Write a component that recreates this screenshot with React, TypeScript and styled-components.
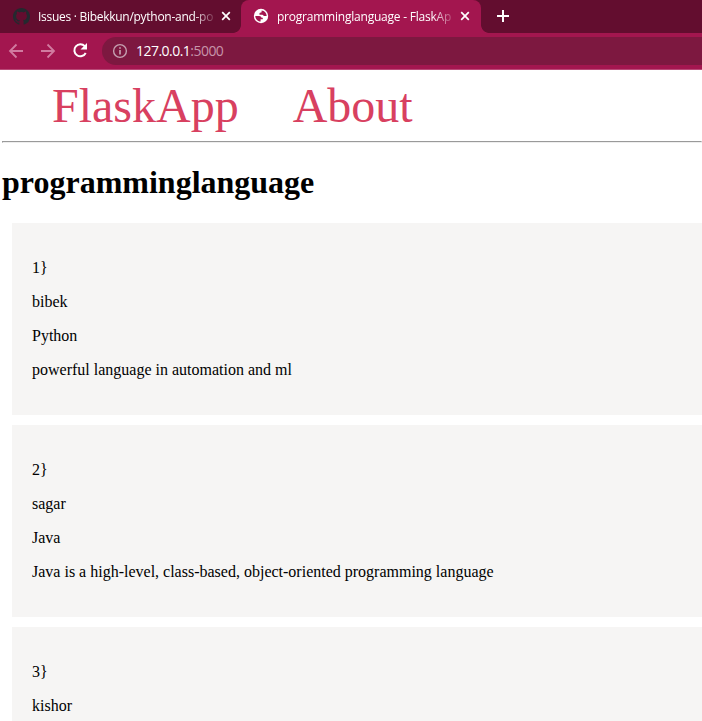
import React from "react";
import styled, { createGlobalStyle } from "styled-components";

const GlobalStyle = createGlobalStyle`
  html, body { margin: 0; overflow: hidden; background: #fff; }
`;

const Window = styled.div`
  width: 702px;
  height: 721px;
  overflow: hidden;
  display: flex;
  flex-direction: column;
  background: #fff;
`;

const TabStrip = styled.div`
  display: flex;
  height: 33px;
  flex: none;
  background: #630d2f;
  font: 12px/16px "Open Sans", "Noto Sans", sans-serif;
`;

const Tab = styled.div<{ $active?: boolean }>`
  position: relative;
  box-sizing: border-box;
  width: ${(p) => (p.$active ? 240 : 241)}px;
  height: 33px;
  padding: 0 ${(p) => (p.$active ? 9 : 8)}px 1px ${(p) => (p.$active ? 12 : 13)}px;
  display: flex;
  align-items: center;
  border-radius: 8px 8px 0 0;
  background: ${(p) => (p.$active ? "#a3164f" : "transparent")};
  &::before, &::after {
    content: "";
    display: ${(p) => (p.$active ? "block" : "none")};
    position: absolute;
    bottom: 0;
    width: 8px;
    height: 8px;
  }
  &::before {
    left: -8px;
    background: radial-gradient(circle at 0 0, transparent 7.5px, #a3164f 8.2px);
  }
  &::after {
    right: -8px;
    background: radial-gradient(circle at 100% 0, transparent 7.5px, #a3164f 8.2px);
  }
`;

const TabTitle = styled.div<{ $spacing: number }>`
  flex: 1;
  margin: 1px 3px 0 8px;
  overflow: hidden;
  white-space: nowrap;
  color: #fff;
  letter-spacing: ${(p) => p.$spacing}px;
  mask-image: linear-gradient(to right, #000 155px, transparent 180px);
`;

const Icon = styled.svg`
  display: block;
  flex: none;
`;

const NewTab = styled.div`
  padding: 10px 0 0 16px;
`;

const Toolbar = styled.div`
  box-sizing: border-box;
  display: flex;
  align-items: center;
  flex: none;
  height: 37px;
  padding: 0 0 1px 8px;
  gap: 16px;
  background: #a3164f;
  border-bottom: 1px solid #b94977;
`;

const AddressBar = styled.div`
  box-sizing: border-box;
  flex: 1;
  height: 28px;
  margin: 1px 0 0 -3px;
  padding-left: 10px;
  display: flex;
  align-items: center;
  gap: 8px;
  border-radius: 14px 0 0 14px;
  background: #7d1840;
  color: #fff;
  font: 14px/20px "Open Sans", "Noto Sans", sans-serif;
  letter-spacing: -0.53px;
`;

const Port = styled.span`
  color: #c795aa;
`;

const Page = styled.main`
  padding-left: 2px;
  font: 16px/18px "Liberation Serif", "Times New Roman", serif;
  color: #000;
`;

const Nav = styled.nav`
  display: flex;
  gap: 54px;
  height: 71px;
  padding-left: 50px;
  font-size: 48px;
  line-height: 72px;
  color: #d84060;
`;

const Rule = styled.hr`
  margin: 0;
  border: 1px solid;
  border-color: #9a9a9a #eee #eee #9a9a9a;
`;

const Heading = styled.h1`
  margin: 21px 0 22px;
  font-size: 32px;
  line-height: 37px;
`;

const Card = styled.article`
  margin: 0 0 10px 10px;
  padding: 20px;
  background: #f6f5f4;
  display: flow-root;
`;

const Line = styled.p`
  margin: 16px 0;
  white-space: nowrap;
`;

const Close = () => (
  <Icon width="14" height="14" viewBox="0 0 14 14" stroke="#fff" strokeWidth="1.7">
    <path d="M3.2 3.2l7.6 7.6M10.8 3.2l-7.6 7.6" />
  </Icon>
);

const Github = () => (
  <Icon width="17" height="17" viewBox="0 0 16 16" fill="#24292f">
    <path d="M8 0C3.58 0 0 3.58 0 8c0 3.54 2.29 6.53 5.47 7.59.4.07.55-.17.55-.38 0-.19-.01-.82-.01-1.49-2.01.37-2.53-.49-2.69-.94-.09-.23-.48-.94-.82-1.13-.28-.15-.68-.52-.01-.53.63-.01 1.08.58 1.23.82.72 1.21 1.87.87 2.33.66.07-.52.28-.87.51-1.07-1.78-.2-3.64-.89-3.64-3.95 0-.87.31-1.59.82-2.15-.08-.2-.36-1.02.08-2.12 0 0 .67-.21 2.2.82.64-.18 1.32-.27 2-.27s1.36.09 2 .27c1.53-1.04 2.2-.82 2.2-.82.44 1.1.16 1.92.08 2.12.51.56.82 1.27.82 2.15 0 3.07-1.87 3.75-3.65 3.95.29.25.54.73.54 1.48 0 1.07-.01 1.93-.01 2.2 0 .21.15.46.55.38A8.01 8.01 0 0 0 16 8c0-4.42-3.58-8-8-8z" />
  </Icon>
);

const Globe = () => (
  <Icon width="16" height="16" viewBox="0 0 16 16">
    <circle cx="8" cy="8" r="7.2" fill="#fff" />
    <path
      d="M8.600 2.400C11.600 2.700 13.600 5 13.700 8H11.500C10.600 8 10.300 7 9.300 6.700H6.500V5L8.600 4.300zM2.300 8H6.200C7.500 8 8.300 8.800 8.500 9.800H9.800V11.200H7.600V13.600C4.600 13.400 2.300 11 2.300 8z"
      fill="#a3164f"
    />
  </Icon>
);

const Arrow = ({ back }: { back?: boolean }) => (
  <Icon width="16" height="16" viewBox="0 0 16 16" fill="none" stroke="#d17ba0" strokeWidth="1.8">
    <path d={back ? "M15 8H2M8.5 1.5L2 8l6.5 6.5" : "M1 8h13M7.5 1.5L14 8l-6.5 6.5"} />
  </Icon>
);

const Reload = () => (
  <Icon width="17" height="17" viewBox="0 0 17 17">
    <path d="M13.700 11A6 6 0 1 1 12.800 4.200" fill="none" stroke="#fff" strokeWidth="2" />
    <path d="M15 1v6.500H8.500z" fill="#fff" />
  </Icon>
);

const Info = () => (
  <Icon width="16" height="16" viewBox="0 0 16 16">
    <circle cx="8" cy="8" r="6.4" fill="none" stroke="#c5a0b0" strokeWidth="1.4" />
    <path d="M8 7v4.5M8 4.2v1.6" stroke="#c5a0b0" strokeWidth="1.7" />
  </Icon>
);

const entries = [
  ["1}", "bibek", "Python", "powerful language in automation and ml"],
  ["2}", "sagar", "Java", "Java is a high-level, class-based, object-oriented programming language"],
  ["3}", "kishor"],
];

export default function App() {
  return (
    <>
      <GlobalStyle />
      <Window>
        <TabStrip>
          <Tab>
            <Github />
            <TabTitle $spacing={-0.28}>Issues · Bibekkun/python-and-po</TabTitle>
            <Close />
          </Tab>
          <Tab $active>
            <Globe />
            <TabTitle $spacing={-0.22}>programminglanguage - FlaskAp</TabTitle>
            <Close />
          </Tab>
          <NewTab>
            <Icon width="12" height="12" viewBox="0 0 12 12" stroke="#fff" strokeWidth="2">
              <path d="M6 0v12M0 6h12" />
            </Icon>
          </NewTab>
        </TabStrip>
        <Toolbar>
          <Arrow back />
          <Arrow />
          <Reload />
          <AddressBar>
            <Info />
            <span>127.0.0.1<Port>:5000</Port></span>
          </AddressBar>
        </Toolbar>
        <Page>
          <Nav>
            <span>FlaskApp</span>
            <span>About</span>
          </Nav>
          <Rule />
          <Heading>programminglanguage</Heading>
          {entries.map((lines) => (
            <Card key={lines[0]}>
              {lines.map((text) => (
                <Line key={text}>{text}</Line>
              ))}
            </Card>
          ))}
        </Page>
      </Window>
    </>
  );
}
